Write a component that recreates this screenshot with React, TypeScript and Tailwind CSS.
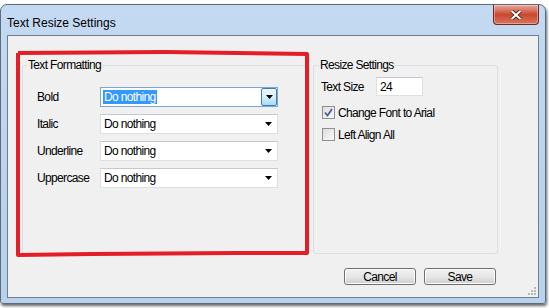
import React from 'react';

const font = { fontFamily: '"Liberation Sans", Arial, sans-serif' };

const Arrow = () => (
  <svg width="7" height="4" viewBox="0 0 7 4">
    <polygon points="0,0 7,0 3.5,4" fill="#000" />
  </svg>
);

interface ComboProps {
  value: string;
  focused?: boolean;
}

const Combo: React.FC<ComboProps> = ({ value, focused }) => {
  if (focused) {
    return (
      <div className="flex h-[20px] w-[178px] items-stretch border border-[#7ea6d2] bg-white">
        <div className="flex flex-1 items-center pl-[2px]">
          <span className="bg-[#3399ff] px-[1px] leading-[14px] text-white">{value}</span>
        </div>
        <div className="flex w-[16px] items-center justify-center rounded-[2px] border border-[#3c7fb1] bg-gradient-to-b from-[#eaf6fd] via-[#d9f0fc] to-[#a7d9f5]">
          <Arrow />
        </div>
      </div>
    );
  }
  return (
    <div className="flex h-[20px] w-[178px] items-center justify-between border border-[#dcdfe3] border-t-[#c5c8cc] bg-white pl-[3px] pr-[5px]">
      <span>{value}</span>
      <Arrow />
    </div>
  );
};

const CheckBox: React.FC<{ checked?: boolean; label: string }> = ({ checked, label }) => (
  <div className="flex h-[13px] items-center gap-[3px]">
    <div className="flex h-[13px] w-[13px] items-center justify-center border border-[#8e8f8f] bg-gradient-to-br from-[#dcdcdc] to-[#fbfbfb]">
      {checked && (
        <svg width="9" height="9" viewBox="0 0 9 9">
          <path d="M1 4.5 L3.5 7.5 L8 1" stroke="#4a5f97" strokeWidth="1.8" fill="none" />
        </svg>
      )}
    </div>
    <span>{label}</span>
  </div>
);

const rows = ['Bold', 'Italic', 'Underline', 'Uppercase'];

export default function App() {
  return (
    <div className="relative h-[308px] w-[549px] overflow-hidden bg-white pt-[4px] text-[12px] tracking-[-0.65px] text-black" style={font}>
      <div className="flex h-[300px] w-[546px] flex-col rounded-t-[7px] rounded-b-[3px] border border-[#5d6b7a] bg-gradient-to-b from-[#c4daf2] via-[#bcd4ee] to-[#b8d2ec] shadow-[1px_2px_3px_rgba(0,0,0,0.6)]">
        {/* title bar */}
        <div className="flex h-[30px] items-start">
          <div className="pl-[6px] pt-[9px] text-[12px] tracking-normal">Text Resize Settings</div>
          <div className="ml-auto mr-[6px] flex h-[20px] w-[46px] items-center justify-center rounded-b-[4px] border border-t-0 border-[#6d2a22] bg-gradient-to-b from-[#e8a898] via-[#c9472f] to-[#d8735c] shadow-[inset_0_0_0_1px_rgba(255,255,255,0.35)]">
            <svg width="12" height="10" viewBox="0 0 12 10">
              <path d="M1.5 1 L10.5 9 M10.5 1 L1.5 9" stroke="#3a1a15" strokeWidth="3.6" />
              <path d="M1.5 1 L10.5 9 M10.5 1 L1.5 9" stroke="#fff" strokeWidth="2" />
            </svg>
          </div>
        </div>

        {/* client area */}
        <div className="relative mx-[6px] mb-[5px] flex flex-1 flex-col border border-[#6f7f8f] bg-[#f0f0f0] pl-[14px] pt-[22px]">
          <div className="flex gap-[7px]">
            <fieldset className="h-[196px] w-[284px] rounded-[3px] border border-[#d5dfe5]">
              <legend className="ml-[4px] px-[1px] leading-[14px]">Text Formatting</legend>
              <div className="mt-[15px] flex flex-col gap-[7px] pl-[14px]">
                {rows.map((r, i) => (
                  <div key={r} className="flex items-center">
                    <span className="w-[63px]">{r}</span>
                    <Combo value="Do nothing" focused={i === 0} />
                  </div>
                ))}
              </div>
            </fieldset>

            <fieldset className="h-[196px] w-[185px] rounded-[3px] border border-[#d5dfe5]">
              <legend className="ml-[5px] px-[1px] leading-[14px]">Resize Settings</legend>
              <div className="mt-[5px] flex flex-col pl-[7px]">
                <div className="flex items-center">
                  <span className="w-[55px]">Text Size</span>
                  <div className="flex h-[19px] w-[47px] items-center border border-[#dcdfe3] border-t-[#c5c8cc] bg-white pl-[3px]">24</div>
                </div>
                <div className="mt-[10px] flex flex-col gap-[9px] pl-[1px]">
                  <CheckBox checked label="Change Font to Arial" />
                  <CheckBox label="Left Align All" />
                </div>
              </div>
            </fieldset>
          </div>

          <div className="mt-[14px] flex justify-end gap-[8px] pr-[42px]">
            {['Cancel', 'Save'].map((b) => (
              <button
                key={b}
                className="flex h-[17px] w-[72px] items-center justify-center rounded-[3px] border border-[#707070] bg-gradient-to-b from-[#f3f3f3] via-[#e6e6e6] to-[#d0d0d0] shadow-[inset_0_0_0_1px_#fcfcfc]"
              >
                {b}
              </button>
            ))}
          </div>

          {/* size grip */}
          <svg className="absolute bottom-[2px] right-[2px]" width="8" height="8" viewBox="0 0 8 8">
            {[[6, 0], [6, 3], [3, 3], [6, 6], [3, 6], [0, 6]].map(([x, y], i) => (
              <rect key={i} x={x} y={y} width="2" height="2" fill="#b8b8b8" />
            ))}
          </svg>
        </div>
      </div>

      {/* red annotation */}
      <svg className="pointer-events-none absolute left-0 top-0" width="549" height="308">
        <polyline
          points="18,53 165,52 307,54 307,253 236,253 92,254 18,255 18,53"
          fill="none"
          stroke="#e31e27"
          strokeWidth="4"
          strokeLinejoin="round"
        />
      </svg>
    </div>
  );
}
